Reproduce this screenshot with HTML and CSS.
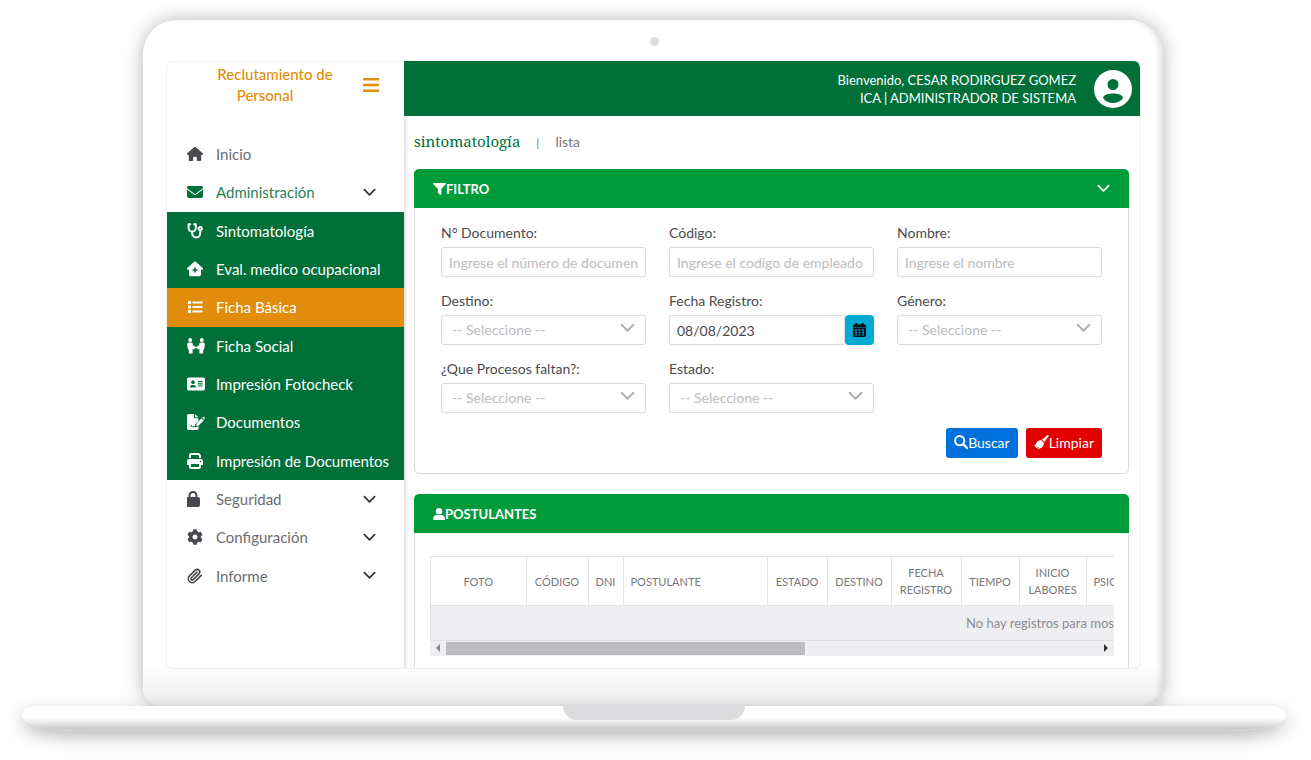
FILE: index.html
```html
<!DOCTYPE html>
<html lang="es">
<head>
<meta charset="utf-8">
<meta name="viewport" content="width=device-width, initial-scale=1">
<title>Reclutamiento de Personal</title>
<link rel="stylesheet" href="styles.css">
</head>
<body>
<svg class="sprite" aria-hidden="true">
  <symbol id="chevron" viewBox="0 0 14 9"><path d="M1.500 1.500 7 7l5.500-5.500" fill="none" stroke="currentColor" stroke-width="1.900" stroke-linecap="round" stroke-linejoin="round"/></symbol>
</svg>
<div class="laptop">
  <div class="lid">
    <span class="camera"></span>
    <div class="screen">
      <aside class="sidebar">
        <div class="brand">
          <span class="brand-name">Reclutamiento de <span class="brand-end">Personal</span></span>
          <button class="menu-toggle" type="button" aria-label="Menú">
            <svg width="16" height="14" viewBox="0 0 16 14"><path d="M0 1.200h16M0 7h16M0 12.800h16" stroke="currentColor" stroke-width="2.400"/></svg>
          </button>
        </div>
        <nav class="nav">
          <a class="item" href="#"><svg class="icon" viewBox="0 0 576 512"><path d="M575.8 255.5c0 18-15 32.1-32 32.1h-32l.7 160.2c0 2.700-.2 5.400-.5 8.100V472c0 22.100-17.900 40-40 40H392c-22.100 0-40-17.900-40-40v-88c0-17.700-14.300-32-32-32h-64c-17.700 0-32 14.300-32 32v88c0 22.100-17.900 40-40 40h-80c-22.100 0-40-17.900-40-40V287.600H32c-18 0-32-14-32-32.100 0-9 3-17 10-24L266.400 8c7-7 15-8 22-8s15 2 21 7l255.400 224.500c8 7 12 15 11 24z"/></svg><span>Inicio</span></a>
          <a class="item current" href="#"><svg class="icon" viewBox="0 0 512 512"><path d="M48 64C21.500 64 0 85.500 0 112c0 15.100 7.100 29.300 19.200 38.400l217.600 163.200c11.400 8.500 27 8.500 38.400 0l217.600-163.200c12.100-9.100 19.200-23.300 19.200-38.400 0-26.500-21.500-48-48-48H48zM0 176v208c0 35.300 28.700 64 64 64h384c35.300 0 64-28.700 64-64V176L294.400 339.200c-22.800 17.100-54 17.100-76.800 0L0 176z"/></svg><span>Administración</span><svg class="caret"><use href="#chevron"/></svg></a>
          <a class="item sub" href="#"><svg class="icon" viewBox="0 0 16 16"><path d="M3.200 1.300H1.600V5a3.600 3.600 0 0 0 7.200 0V1.300H7.200M5.200 8.800v1.700a4 4 0 0 0 8 0V7.500" fill="none" stroke="currentColor" stroke-width="2" stroke-linecap="round" stroke-linejoin="round"/><circle cx="13.200" cy="5.500" r="1.700" fill="none" stroke="currentColor" stroke-width="1.800"/></svg><span>Sintomatología</span></a>
          <a class="item sub" href="#"><svg class="icon" viewBox="0 0 16 16"><path fill-rule="evenodd" d="M7.300.8a1 1 0 0 1 1.400 0l7 6.300c.6.600.2 1.700-.700 1.700h-1v4.700c0 1-.7 1.700-1.700 1.700H3.700c-1 0-1.700-.7-1.700-1.700V8.800H1C.100 8.800-.300 7.700.300 7.100zM7.200 6.600v1.600H5.600v1.600h1.600v1.600h1.600V9.800h1.600V8.200H8.800V6.600z"/></svg><span>Eval. medico ocupacional</span></a>
          <a class="item sub active" href="#"><svg class="icon" viewBox="0 0 16 16"><path d="M1 2h3v3H1zM1 6.500h3v3H1zM1 11h3v3H1zM5.500 2.500h10v2h-10zM5.500 7h10v2h-10zM5.500 11.500h10v2h-10z"/></svg><span>Ficha Básica</span></a>
          <a class="item sub" href="#"><svg class="icon wide" viewBox="0 0 18 16"><circle cx="3.200" cy="2" r="1.900"/><circle cx="14.800" cy="2" r="1.900"/><path d="M1.800 4.600h2.600c.8 0 1.100.5 1.300 1.200l.5 2.200 1.300-.7v4.400l-1.900-.9V15.500H1.800v-3.300L.300 9.500V6.300c0-1 .6-1.700 1.500-1.700zM16.200 4.600h-2.600c-.8 0-1.100.5-1.300 1.200L11.800 8l-1.300-.7v4.400l1.900-.9V15.500h3.800v-3.300l1.500-2.700V6.300c0-1-.6-1.700-1.500-1.700z"/><path d="M7 9.500h4" stroke="currentColor" stroke-width="1.500"/></svg><span>Ficha Social</span></a>
          <a class="item sub" href="#"><svg class="icon wide" viewBox="0 0 18 16"><path fill-rule="evenodd" d="M1.800 1.500h14.400C17.200 1.500 18 2.300 18 3.300v9.400c0 1-.8 1.800-1.800 1.800H1.800c-1 0-1.800-.8-1.800-1.800V3.300c0-1 .8-1.800 1.800-1.800zM6 4.300a1.900 1.900 0 1 0 0 3.800 1.900 1.900 0 0 0 0-3.800zM3 11.500h6c0-1.700-1-2.600-2.200-2.600H5.200C4 8.900 3 9.800 3 11.500zM11 5v1.200h4.500V5zM11 7.300v1.200h4.500V7.300zM11 9.600v1h4.500v-1z"/></svg><span>Impresión Fotocheck</span></a>
          <a class="item sub" href="#"><svg class="icon wide" viewBox="0 0 18 16"><path d="M0 1.800C0 .8.700 0 1.700 0H7v4.300h4.300v3L8.200 10.500 7.500 13l-1-.9-1 .6-1-2.200L3 13.300h1l.7-1.500.7 1.500h3.200l3-1v2c0 1-.8 1.700-1.800 1.700H1.700c-1 0-1.700-.7-1.700-1.700z"/><path d="M8 0v3.300h3.300zM14.500 4.300l2.200 2.200-5 5-2.600.5.500-2.600zM15.200 3.600l.6-.6c1-.8 2.600.8 1.800 1.800l-.6.600z"/></svg><span>Documentos</span></a>
          <a class="item sub" href="#"><svg class="icon" viewBox="0 0 512 512"><path d="M128 0C92.700 0 64 28.700 64 64v96h64V64h226.700L384 93.300V160h64V93.300c0-17-6.700-33.300-18.700-45.300L400 18.700C388 6.700 371.700 0 354.700 0H128zM384 352v96H128v-96h256zm64 32h32c17.700 0 32-14.300 32-32v-96c0-35.300-28.700-64-64-64H64c-35.300 0-64 28.700-64 64v96c0 17.700 14.300 32 32 32h32v64c0 35.300 28.700 64 64 64h256c35.300 0 64-28.700 64-64v-64zM432 248a24 24 0 1 1 0 48 24 24 0 1 1 0-48z"/></svg><span>Impresión de Documentos</span></a>
          <a class="item" href="#"><svg class="icon" viewBox="32 0 512 512"><path d="M144 144v48h160v-48c0-44.200-35.800-80-80-80s-80 35.800-80 80zM80 192v-48C80 64.500 144.500 0 224 0s144 64.500 144 144v48h16c35.300 0 64 28.700 64 64v192c0 35.300-28.700 64-64 64H64c-35.300 0-64-28.700-64-64V256c0-35.300 28.700-64 64-64z"/></svg><span>Seguridad</span><svg class="caret"><use href="#chevron"/></svg></a>
          <a class="item" href="#"><svg class="icon" viewBox="0 0 512 512"><path d="M487.400 315.700l-42.600-24.600c4.300-23.200 4.300-47 0-70.200l42.600-24.600c4.900-2.800 7.100-8.600 5.500-14-11.100-35.600-30-67.800-54.700-94.600-3.800-4.100-10-5.100-14.800-2.300L380.800 110c-17.900-15.400-38.500-27.300-60.800-35.100V25.800c0-5.600-3.900-10.500-9.400-11.700-36.700-8.200-74.300-7.800-109.200 0-5.500 1.200-9.400 6.100-9.400 11.700V75c-22.200 7.900-42.800 19.800-60.800 35.100L88.700 85.500c-4.900-2.800-11-1.900-14.800 2.300-24.700 26.700-43.600 58.900-54.700 94.600-1.700 5.400.6 11.200 5.500 14L67.300 221c-4.300 23.200-4.300 47 0 70.200l-42.600 24.600c-4.900 2.800-7.100 8.600-5.500 14 11.100 35.600 30 67.800 54.700 94.600 3.800 4.100 10 5.100 14.800 2.300l42.600-24.600c17.900 15.400 38.500 27.300 60.800 35.100v49.200c0 5.600 3.900 10.500 9.400 11.700 36.700 8.200 74.300 7.800 109.200 0 5.500-1.200 9.400-6.100 9.400-11.700v-49.200c22.200-7.900 42.800-19.800 60.800-35.100l42.600 24.600c4.900 2.800 11 1.900 14.800-2.300 24.700-26.700 43.600-58.900 54.700-94.600 1.500-5.500-.7-11.300-5.600-14.100zM256 336c-44.100 0-80-35.900-80-80s35.900-80 80-80 80 35.900 80 80-35.900 80-80 80z"/></svg><span>Configuración</span><svg class="caret"><use href="#chevron"/></svg></a>
          <a class="item" href="#"><svg class="icon" viewBox="0 0 24 24"><path d="m21.440 11.050-9.190 9.190a6 6 0 0 1-8.490-8.490l8.570-8.570A4 4 0 1 1 18 8.840l-8.590 8.570a2 2 0 0 1-2.830-2.830l8.490-8.480" fill="none" stroke="currentColor" stroke-width="2.400" stroke-linecap="round"/></svg><span>Informe</span><svg class="caret"><use href="#chevron"/></svg></a>
        </nav>
      </aside>
      <div class="page">
        <header class="topbar">
          <div class="welcome">Bienvenido, CESAR RODIRGUEZ GOMEZ<br>ICA | ADMINISTRADOR DE SISTEMA</div>
          <svg class="avatar" viewBox="0 0 38 38"><path fill-rule="evenodd" d="M19 0a19 19 0 1 0 0 38 19 19 0 0 0 0-38zM19 9a5.500 5.500 0 1 1 0 11 5.500 5.500 0 0 1 0-11zM9 28c0-3.500 6-4.600 10-4.600S29 24.500 29 28c-2.300 3.200-6 5-10 5s-7.700-1.800-10-5z"/></svg>
        </header>
        <main class="content">
          <div class="crumbs"><h1>sintomatología</h1><span class="bar">|</span><span>lista</span></div>
          <section class="card">
            <div class="card-head">
              <svg width="13" height="12" viewBox="0 0 13 12"><path d="M.6 0h11.800c.6 0 .8.600.4 1L8.300 6v5.300c0 .6-.5.800-1 .5l-2-1.500a1 1 0 0 1-.4-.8V6L.200 1C-.200.600 0 0 .600 0z"/></svg><h2>FILTRO</h2>
              <svg class="caret"><use href="#chevron"/></svg>
            </div>
            <form class="filter">
              <div class="fields">
                <div class="field"><label for="doc">N° Documento:</label><input id="doc" type="text" placeholder="Ingrese el número de documento"></div>
                <div class="field"><label for="cod">Código:</label><input id="cod" type="text" placeholder="Ingrese el codigo de empleado"></div>
                <div class="field"><label for="nom">Nombre:</label><input id="nom" type="text" placeholder="Ingrese el nombre"></div>
                <div class="field"><label for="des">Destino:</label><div class="pick"><select id="des"><option>-- Seleccione --</option></select><svg><use href="#chevron"/></svg></div></div>
                <div class="field"><label for="fec">Fecha Registro:</label><div class="date"><input id="fec" type="text" value="08/08/2023"><button type="button" aria-label="Calendario"><svg width="13" height="14" viewBox="0 0 13 14"><path fill-rule="evenodd" d="M2.500 0h2v1.500h4V0h2v1.500h1c.8 0 1.500.6 1.500 1.500v1H0V3c0-.9.700-1.500 1.500-1.500h1zM0 4.600h13v8c0 .8-.6 1.400-1.400 1.400H1.400C.6 14 0 13.400 0 12.600zM2 6.200v1.600h2V6.200zm3.500 0v1.600h2V6.200zm3.500 0v1.600h2V6.200zM2 8.800v1.400h2V8.800zm3.500 0v1.400h2V8.800zm3.500 0v1.400h2V8.800zM2 11.200v1.300h2v-1.300zm3.500 0v1.300h2v-1.300zm3.500 0v1.300h2v-1.300z"/></svg></button></div></div>
                <div class="field"><label for="gen">Género:</label><div class="pick"><select id="gen"><option>-- Seleccione --</option></select><svg><use href="#chevron"/></svg></div></div>
                <div class="field"><label for="pro">¿Que Procesos faltan?:</label><div class="pick"><select id="pro"><option>-- Seleccione --</option></select><svg><use href="#chevron"/></svg></div></div>
                <div class="field"><label for="est">Estado:</label><div class="pick"><select id="est"><option>-- Seleccione --</option></select><svg><use href="#chevron"/></svg></div></div>
              </div>
              <div class="actions">
                <button class="btn search" type="button"><svg width="14" height="16" viewBox="0 0 14 16"><circle cx="5.700" cy="5.700" r="4.600" fill="none" stroke="currentColor" stroke-width="2"/><path d="m9 9 4 4" stroke="currentColor" stroke-width="2.400" stroke-linecap="round"/></svg>Buscar</button>
                <button class="btn clear" type="button"><svg width="15" height="16" viewBox="0 0 15 16"><path d="M13.200.300c.8-.6 1.900.4 1.300 1.200L10.300 7 8 4.800zM7.300 5.300l2.500 2.500c.5 3.400-2.800 6.200-6.300 6.200L5 11.500l-2.500 1.600L0 10.300c1-.3 1.400-.8 2-1.900.9-2 2.600-3.400 5.300-3.100z"/></svg>Limpiar</button>
              </div>
            </form>
          </section>
          <section class="card">
            <div class="card-head">
              <svg width="12" height="12" viewBox="0 0 12 12"><circle cx="6" cy="3.200" r="3.200"/><path d="M0 12c0-3.500 1.500-5 3.700-5h4.600C10.500 7 12 8.500 12 12z"/></svg><h2>POSTULANTES</h2>
            </div>
            <div class="results">
              <div class="scroller">
                <table>
                  <colgroup><col class="w-photo"><col class="w-code"><col class="w-dni"><col class="w-name"><col class="w-state"><col class="w-dest"><col class="w-date"><col class="w-time"><col class="w-start"><col></colgroup>
                  <thead><tr><th>FOTO</th><th>CÓDIGO</th><th>DNI</th><th class="left">POSTULANTE</th><th>ESTADO</th><th>DESTINO</th><th>FECHA REGISTRO</th><th>TIEMPO</th><th>INICIO LABORES</th><th class="left">PSICOLOGÍA</th></tr></thead>
                  <tbody><tr><td colspan="10">No hay registros para mostrar</td></tr></tbody>
                </table>
              </div>
              <div class="scrollbar">
                <svg class="arrow off" viewBox="0 0 4 8"><path d="M4 0v8L0 4z"/></svg>
                <div class="track"><div class="thumb"></div></div>
                <svg class="arrow" viewBox="0 0 4 8"><path d="M0 0v8l4-4z"/></svg>
              </div>
            </div>
          </section>
        </main>
      </div>
    </div>
  </div>
  <div class="base"><div class="notch"></div></div>
</div>
</body>
</html>
```

FILE: styles.css
```css
* { box-sizing: border-box; }
body {
  margin: 0;
  background: #fff;
  color: #4a4a4e;
  font: 14px/18px Lato, "Open Sans", sans-serif;
}
button, input, select { font: inherit; color: inherit; margin: 0; }
svg { fill: currentColor; flex: none; }
.sprite { position: absolute; width: 0; height: 0; }

.laptop { padding: 20px 25px 28px 22px; }
.lid {
  position: relative;
  margin: 0 123px 0 121px;
  padding: 41px 22px 37px 23px;
  border-radius: 34px 34px 18px 18px;
  background: linear-gradient(#fff 94%, #ececee);
  box-shadow: 0 0 18px rgba(0, 0, 0, .3), inset -6px 0 6px -3px rgba(0, 0, 0, .12);
}
.camera {
  position: absolute;
  top: 17px;
  left: 50%;
  width: 9px;
  height: 9px;
  margin-left: -3px;
  border-radius: 50%;
  background: #dcdcde;
}
.base {
  position: relative;
  display: flex;
  justify-content: center;
  height: 25px;
  border-radius: 16px 16px 60px 60px / 10px 10px 16px 16px;
  background: linear-gradient(#fff 45%, #ececee 65%, #cbcbcd 90%, #d0d0d2);
  box-shadow: 0 6px 18px rgba(0, 0, 0, .28);
}
.notch {
  width: 182px;
  height: 14px;
  border-radius: 0 0 14px 14px;
  background: #dcdcde;
}
.screen {
  display: grid;
  grid-template-columns: 237px 1fr;
  height: 608px;
  overflow: hidden;
  border: 1px solid #f0eff2;
  border-width: 0 1px 1px;
  border-radius: 7px;
}

.sidebar { border-top: 1px solid #eee; box-shadow: 1px 0 4px rgba(0, 0, 0, .2); }
.brand {
  display: flex;
  justify-content: space-between;
  align-items: flex-start;
  padding: 2px 25px 29px 43px;
  color: #e18d0b;
}
.brand-name { width: 130px; font-size: 15px; line-height: 21px; font-weight: 500; text-align: center; }
.brand-end { padding-right: 20px; }
.menu-toggle { padding: 14px 0 0; border: 0; background: none; line-height: 0; cursor: pointer; }
.nav { display: grid; grid-auto-rows: 1fr; min-height: 460px; }
.item {
  display: flex;
  align-items: center;
  padding: 0 28px 0 20px;
  color: #6c6c72;
  font-size: 15px;
  text-decoration: none;
  white-space: nowrap;
}
.item span { flex: 1; }
.icon { width: 16px; height: 16px; margin-right: 13px; color: #48484f; }
.icon.wide { width: 18px; margin-right: 11px; }
.caret { width: 13px; height: 9px; color: #333; }
.current { color: #2a7f55; }
.current .icon { color: #007038; }
.sub { padding-right: 10px; background: #007038; color: #fff; }
.sub .icon { color: #fff; }
.sub.active { background: #e18d0b; }

.page { min-width: 0; }
.topbar {
  display: flex;
  justify-content: flex-end;
  align-items: center;
  gap: 18px;
  height: 55px;
  padding-right: 8px;
  background: #007038;
  color: #fff;
  text-align: right;
}
.welcome { font-size: 13px; }
.avatar { width: 38px; height: 38px; }
.content { padding: 0 11px 0 10px; }
.crumbs {
  display: flex;
  align-items: baseline;
  gap: 16px;
  height: 53px;
  padding-top: 15px;
  color: #77777c;
}
.crumbs h1 {
  margin: 0;
  color: #007038;
  font: 15px/20px "Noto Serif", "DejaVu Serif", "Liberation Serif", serif;
}
.bar { font-size: 12px; }
.card { margin-bottom: 20px; border: 1px solid #dcdbe0; border-radius: 5px; background: #fff; }
.card-head {
  display: flex;
  align-items: center;
  height: 39px;
  margin: -1px -1px 0;
  padding: 0 19px;
  border-radius: 5px 5px 0 0;
  background: #009b3a;
  color: #fff;
}
.card-head h2 { flex: 1; margin: 0; font-size: 13px; line-height: 18px; font-weight: 700; }
.card-head .caret { color: #fff; }
.filter { padding: 15px 26px; }
.fields { display: grid; grid-template-columns: repeat(3, 1fr); gap: 14px 23px; }
.field { display: flex; flex-direction: column; gap: 4px; min-width: 0; }
.field label { line-height: 20px; }
.field input, .field select {
  width: 100%;
  height: 30px;
  padding: 0 7px;
  border: 1px solid #dad9de;
  border-radius: 3px;
  background: #fff;
}
.field input::placeholder { color: #bcbcc0; opacity: 1; }
.pick { position: relative; }
.field select { appearance: none; padding: 0 10px; color: #bcbcc0; }
.pick svg { position: absolute; top: 8px; right: 11px; width: 15px; height: 10px; color: #b0b0b4; pointer-events: none; }
.date { display: flex; }
.date input { border-radius: 3px 0 0 3px; }
.date button {
  display: grid;
  place-items: center;
  flex: none;
  width: 29px;
  padding: 0;
  border: 0;
  border-radius: 4px;
  background: #00aad2;
  color: #0a0a12;
}
.actions { display: flex; justify-content: flex-end; gap: 8px; margin-top: 15px; }
.btn { display: flex; align-items: center; height: 30px; padding: 0 8px; border: 0; border-radius: 3px; color: #fff; }
.search { background: #0071dc; }
.clear { background: #e30000; }

.results { padding: 23px 14px 30px 15px; }
.scroller { overflow: hidden; border-left: 1px solid #e4e4e8; }
table { width: 1239px; border-collapse: collapse; table-layout: fixed; }
th {
  height: 49px;
  padding: 0 7px;
  border: 1px solid #e4e4e8;
  border-left: 0;
  color: #77777c;
  font-size: 11px;
  line-height: 17px;
  font-weight: 400;
}
th.left { text-align: left; }
td { height: 34px; padding: 0; background: #efeff1; color: #8c8c90; font-size: 13px; text-align: center; }
.w-photo { width: 95px; }
.w-code { width: 62px; }
.w-dni { width: 35px; }
.w-name { width: 144px; }
.w-state { width: 60px; }
.w-dest { width: 64px; }
.w-date { width: 70px; }
.w-time { width: 58px; }
.w-start { width: 67px; }
.scrollbar { display: flex; align-items: center; height: 16px; border-top: 1px solid #e0e0e3; background: #efeff1; }
.arrow { width: 4px; height: 8px; margin: 0 6px; color: #333; }
.arrow.off { color: #8a8a8e; }
.track { flex: 1; }
.thumb { width: 55%; height: 13px; background: #bdbdbf; }
```
